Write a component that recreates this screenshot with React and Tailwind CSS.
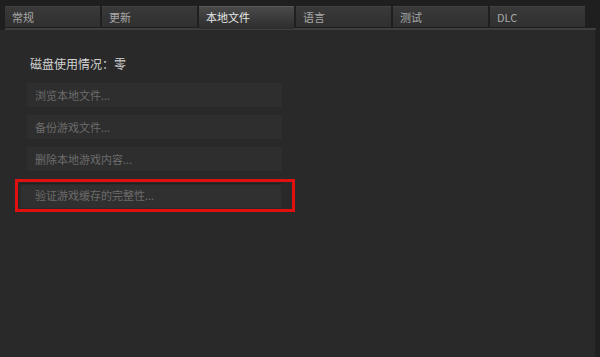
const tabs = ['常规', '更新', '本地文件', '语言', '测试', 'DLC'];
const actions = ['浏览本地文件...', '备份游戏文件...', '删除本地游戏内容...'];

export default function App() {
  return (
    <div className="w-[600px] h-[357px] bg-[#292929] overflow-hidden flex flex-col" style={{ fontFamily: '"Noto Sans CJK SC", "Noto Sans", sans-serif' }}>
      <div className="bg-[#1f1f1f] pt-[6px] pl-[5px] pr-[4px]">
        <div className="flex gap-[2px]">
          {tabs.map((t, i) => (
            i === 2 ? (
              <div key={t} className="w-[95px] h-[23px] -mb-[2px] bg-gradient-to-b from-[#4a4a4a] to-[#2c2c2c] border-t border-[#5a5a5a] text-[11px] text-[#e8e8e8] pl-[7px] pt-[2px] relative z-10">
                {t}
              </div>
            ) : (
              <div key={t} className="w-[95px] h-[21px] bg-gradient-to-b from-[#393939] to-[#303030] border-t border-[#414141] text-[11px] text-[#a8a8a8] pl-[7px] pt-[2px]">
                {t}
              </div>
            )
          ))}
          <div className="flex-1" />
        </div>
        <div className="h-[2px] bg-[#3f3f3f] mt-[1px]" />
      </div>
      <div className="flex-1 border-r-[5px] border-[#202020] pl-[15px] pt-[24px]">
        <p className="text-[12px] text-[#d2d2d2] pl-[15px] leading-[20px]">磁盘使用情况：零</p>
        <div className="mt-[9px] flex flex-col gap-[8px] pl-[12px] w-[267px]">
          {actions.map(a => (
            <div key={a} className="h-[24px] bg-[#2e2e2e] text-[11px] text-[#6c6c6c] pl-[8px] flex items-center">
              {a}
            </div>
          ))}
        </div>
        <div className="mt-[8px] w-[280px] h-[33px] border-[3px] border-[#e01010] py-[1px] pl-[2px] pr-[10px]">
          <div className="h-full bg-[#303030] shadow-[inset_0_1px_2px_rgba(0,0,0,0.4)] text-[11px] text-[#6c6c6c] pl-[15px] flex items-center">
            验证游戏缓存的完整性...
          </div>
        </div>
      </div>
    </div>
  );
}
